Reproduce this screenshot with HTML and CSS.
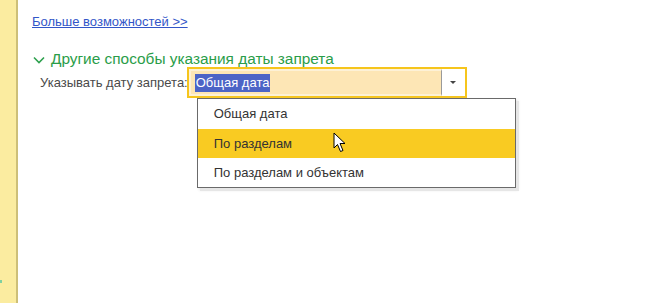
FILE: index.html
```html
<!DOCTYPE html>
<html lang="ru">
<head>
    <meta charset="UTF-8">
    <title>Дата запрета</title>
    <link rel="stylesheet" href="styles.css">
</head>
<body>
    <div class="panel">
        <div class="side-strip"><span class="side-mark"></span></div>
        <div class="content">
            <a class="more-link" href="#">Больше возможностей &gt;&gt;</a>

            <div class="group-title">
                <svg class="chevron" width="12" height="8" viewBox="0 0 12 8">
                    <polyline points="1,1.5 6,6.5 11,1.5" fill="none" stroke="#2fa14f" stroke-width="1.6"/>
                </svg>
                <span>Другие способы указания даты запрета</span>
            </div>

            <div class="field-row">
                <label class="field-label">Указывать дату запрета:</label>
                <div class="combo">
                    <div class="combo-input"><span class="combo-text">Общая дата</span></div>
                    <div class="combo-btn"><span class="arrow"></span></div>

                    <ul class="dropdown">
                        <li>Общая дата</li>
                        <li class="hover">По разделам
                            <svg class="cursor" width="14" height="21" viewBox="0 0 14 21">
                                <path d="M1 1 L1 16 L4.5 12.5 L7.5 19.5 L10 18.5 L7 11.5 L12 11.5 Z" fill="#fff" stroke="#000" stroke-width="1"/>
                            </svg>
                        </li>
                        <li>По разделам и объектам</li>
                    </ul>
                </div>
            </div>
        </div>
    </div>
</body>
</html>
```

FILE: styles.css
```css
body {
    margin: 0;
    font-family: "Liberation Sans", Arial, sans-serif;
    background: #fff;
}
.panel {
    display: flex;
    height: 303px;
}
.side-strip {
    width: 16px;
    background: #fbeca0;
    border-right: 2px solid #cdbf78;
    position: relative;
}
.side-mark {
    position: absolute;
    left: 0;
    top: 280px;
    width: 2px;
    height: 3px;
    background: #7fd0a0;
}
.content {
    padding: 14px 0 0 14px;
    flex: 1;
}
.more-link {
    display: block;
    font-size: 13px;
    color: #3256c8;
    text-decoration: underline;
    line-height: 16px;
}
.group-title {
    display: flex;
    align-items: center;
    margin-top: 20px;
    margin-left: 1px;
    gap: 6px;
    color: #2a9d49;
    font-size: 15.4px;
    line-height: 18px;
}
.chevron {
    margin-top: 1px;
}
.field-row {
    display: flex;
    align-items: center;
    margin-top: -1px;
    margin-left: 8px;
}
.field-label {
    font-size: 13px;
    color: #4a4a4a;
    margin-right: -1px;
}
.combo {
    position: relative;
    display: flex;
    width: 276px;
    height: 27px;
    border: 2px solid #f6c51c;
    background: #fff;
}
.combo-input {
    flex: 1;
    background: #fde6b5;
    border: 2px solid #fdf1d6;
    border-right: 1px solid #9a9a9a;
    display: flex;
    align-items: center;
    padding-left: 4px;
}
.combo-text {
    background: #4c64c6;
    color: #fff;
    font-size: 13px;
    line-height: 18px;
    padding: 0 1px;
}
.combo-btn {
    width: 23px;
    display: flex;
    align-items: center;
    justify-content: center;
}
.arrow {
    width: 0;
    height: 0;
    border-left: 3px solid transparent;
    border-right: 3px solid transparent;
    border-top: 3px solid #444;
}
.dropdown {
    position: absolute;
    left: 8px;
    top: 29px;
    width: 317px;
    margin: 0;
    padding: 0;
    list-style: none;
    background: #fff;
    border: 1px solid #6a6a6a;
    box-shadow: 3px 3px 0 #e6e6e6, 2px 2px 3px #e0e0e0;
}
.dropdown li {
    height: 29px;
    line-height: 29px;
    padding-left: 16px;
    font-size: 13px;
    color: #333;
    position: relative;
}
.dropdown li:first-child {
    height: 30px;
    line-height: 30px;
}
.dropdown li.hover {
    background: #f9cb22;
}
.cursor {
    position: absolute;
    left: 135px;
    top: 3px;
}
```
